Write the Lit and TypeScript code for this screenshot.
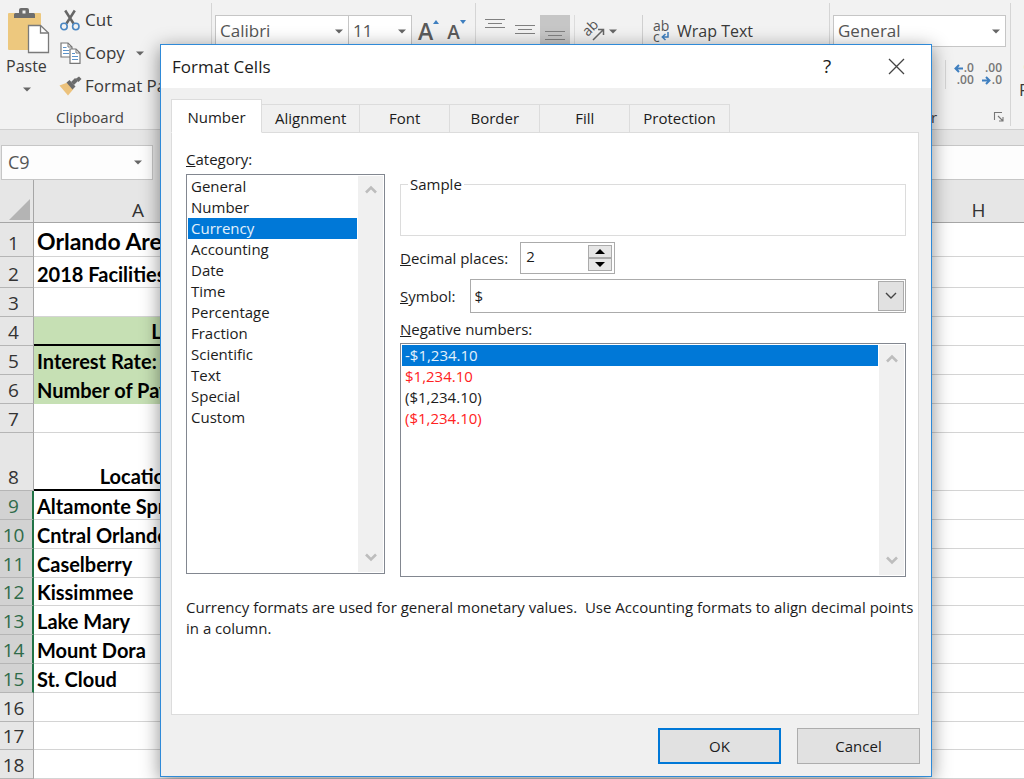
import { LitElement, html, svg, css, nothing } from "lit";
import { customElement, state } from "lit/decorators.js";
import { classMap } from "lit/directives/class-map.js";
import { styleMap } from "lit/directives/style-map.js";

interface Row {
  n: number;
  h: number;
  text?: string;
  kind?: string;
}

const COLUMNS = ["A", "B", "C", "D", "E", "F", "G", "H"];

const ROWS: Row[] = [
  { n: 1, h: 34, text: "Orlando Area", kind: "title" },
  { n: 2, h: 31, text: "2018 Facilities" },
  { n: 3, h: 29 },
  { n: 4, h: 29, text: "Loan Details", kind: "fill ruled merged" },
  { n: 5, h: 29, text: "Interest Rate:", kind: "fill" },
  { n: 6, h: 29, text: "Number of Payments", kind: "fill" },
  { n: 7, h: 29 },
  { n: 8, h: 58, text: "Location", kind: "ruled center" },
  { n: 9, h: 29, text: "Altamonte Springs" },
  { n: 10, h: 29, text: "Cntral Orlando" },
  { n: 11, h: 29, text: "Caselberry" },
  { n: 12, h: 28, text: "Kissimmee" },
  { n: 13, h: 29, text: "Lake Mary" },
  { n: 14, h: 29, text: "Mount Dora" },
  { n: 15, h: 29, text: "St. Cloud" },
  { n: 16, h: 29 },
  { n: 17, h: 28 },
  { n: 18, h: 29 },
];

const CATEGORIES = [
  "General", "Number", "Currency", "Accounting", "Date", "Time",
  "Percentage", "Fraction", "Scientific", "Text", "Special", "Custom",
];

const NEGATIVES = [
  { text: "-$1,234.10", red: false },
  { text: "$1,234.10", red: true },
  { text: "($1,234.10)", red: false },
  { text: "($1,234.10)", red: true },
];

const TABS = ["Number", "Alignment", "Font", "Border", "Fill", "Protection"];

const caret = html`<svg class="caret" width="8" height="5" viewBox="0 0 8 5" aria-hidden="true"><path d="M0 0.5H8L4 4.5Z" fill="#666" /></svg>`;

const pasteIcon = html`<svg width="44" height="46" viewBox="0 0 44 46" aria-hidden="true">
  <rect x="2" y="5" width="33" height="37" rx="1" fill="#edc87e" />
  <path d="M8 10V6.500Q8 5 9.500 5H13V2Q13 0 15 0H21Q23 0 23 2V5H27.500Q29 5 29 6.500V10Z" fill="#6d6d6d" />
  <rect x="16.500" y="2.500" width="3" height="3" fill="#f2f2f2" />
  <path d="M22.500 17.500H34.500L42.500 25V44.500H22.500Z" fill="#fff" stroke="#7a7a7a" stroke-width="1.300" />
  <path d="M34.500 17.500V25H42.500" fill="none" stroke="#7a7a7a" stroke-width="1.300" />
</svg>`;

const cutIcon = html`<svg width="20" height="21" viewBox="0 0 20 21" aria-hidden="true">
  <path d="M5.200 0.500L13.500 13.500M14.800 0.500L6.500 13.500" stroke="#666" stroke-width="2.500" fill="none" />
  <circle cx="4" cy="16.500" r="3.200" fill="none" stroke="#4a86c2" stroke-width="1.600" />
  <circle cx="15.800" cy="16.500" r="3.200" fill="none" stroke="#4a86c2" stroke-width="1.600" />
</svg>`;

const copyIcon = html`<svg width="21" height="22" viewBox="0 0 21 22" aria-hidden="true">
  <path d="M1 1H8L12 5V15H1Z" fill="#fff" stroke="#777" stroke-width="1.200" />
  <path d="M8 1V5H12" fill="none" stroke="#777" />
  <path d="M3 5.500H6.500M3 8.500H9M3 11.500H9" stroke="#5b93ca" stroke-width="1.200" />
  <path d="M10 7H16L20 11V21.300H10Z" fill="#fff" stroke="#777" stroke-width="1.200" />
  <path d="M16 7V11H20" fill="none" stroke="#777" />
  <path d="M12 11.500H15M12 14.500H18M12 17.500H18" stroke="#5b93ca" stroke-width="1.200" />
</svg>`;

const painterIcon = html`<svg width="23" height="20" viewBox="0 0 23 20" aria-hidden="true">
  <path d="M0.500 9.500L8.500 6.500L14.500 13L9 19.500Z" fill="#ecc27c" />
  <path d="M7.500 6.500L10.500 4L16.500 10.500L13.500 13.500Z" fill="#6b6b6b" />
  <path d="M13.500 7.500L17.500 3.500" stroke="#6b6b6b" stroke-width="4" />
  <path d="M16.500 3L20 0.500L22.500 3L19.500 6Z" fill="#6b6b6b" />
</svg>`;

const alignIcon = html`<svg width="20" height="10" viewBox="0 0 20 10" aria-hidden="true">
  <path d="M0 0.500H20M3 4.500H17M0 8.500H20" stroke="#808080" stroke-width="1" />
</svg>`;

const orientIcon = html`<svg width="21" height="22" viewBox="0 0 21 22" aria-hidden="true">
  <g transform="rotate(-45 8 10)"><text class="glyph" x="0" y="12">ab</text></g>
  <path d="M9 20L19 10M14 9.500H19.500V15" fill="none" stroke="#666" stroke-width="1.500" />
</svg>`;

const wrapIcon = html`<span class="wrap-ic" aria-hidden="true"><span>ab</span><span class="line">c<svg width="9" height="9" viewBox="0 0 9 9">
  <path d="M7 0V5H1.500M4.500 2L1.300 5L4.500 8" fill="none" stroke="#3f7fbf" stroke-width="1.500" />
</svg></span></span>`;

const arrowLeft = html`<svg width="9" height="9" viewBox="0 0 9 9"><path d="M9 4.500H1.500M5 1L1.500 4.500L5 8" fill="none" stroke="#3f7fbf" stroke-width="2" /></svg>`;
const arrowRight = html`<svg width="9" height="9" viewBox="0 0 9 9"><path d="M0 4.500H7.500M4 1L7.500 4.500L4 8" fill="none" stroke="#3f7fbf" stroke-width="2" /></svg>`;

const launcherIcon = html`<svg width="10" height="10" viewBox="0 0 10 10" aria-hidden="true">
  <path d="M0.500 8V0.500H8M4 4L8.500 8.500M9 5V9H5" fill="none" stroke="#777" stroke-width="1.100" />
</svg>`;

const chevron = (up: boolean) => svg`<path d=${up ? "M1 7.500L6 2.500L11 7.500" : "M1 1.500L6 6.500L11 1.500"} fill="none" stroke="#bdbdbd" stroke-width="2.600" />`;

@customElement("app-root")
export class AppRoot extends LitElement {
  @state() private tab = "Number";
  @state() private category = "Currency";
  @state() private places = 2;

  static styles = css`
    :host {
      display: block;
      position: relative;
      height: 100vh;
      min-height: 779px;
      overflow: hidden;
      background: #fff;
      color: #222;
      font-family: "Open Sans", "Noto Sans", sans-serif;
      font-size: 15px;
      line-height: 21px;
    }
    * { box-sizing: border-box; }
    button, select, input {
      margin: 0;
      padding: 0;
      border: 0;
      border-radius: 0;
      outline: 0;
      background: none;
      color: inherit;
      font: inherit;
      appearance: none;
    }
    svg { display: block; flex: none; overflow: visible; }
    .caret { pointer-events: none; }

    .ribbon {
      display: flex;
      height: 130px;
      overflow: hidden;
      background: #f2f2f2;
      border-bottom: 1px solid #cfcfcf;
      font-size: 17px;
      line-height: 24px;
      color: #3a3a3a;
      white-space: nowrap;
    }
    .group {
      flex: none;
      display: flex;
      flex-direction: column;
      margin: 3px 0;
      border-right: 1px solid #d5d5d5;
    }
    .tools { display: flex; }
    .caption {
      display: flex;
      justify-content: center;
      align-items: center;
      margin-top: auto;
      font-size: 15px;
      line-height: 18px;
      color: #444;
    }
    .g-clip { width: 212px; }
    .g-clip .tools { gap: 8px; padding: 5px 0 0 6px; }
    .g-clip .caption { padding-right: 31px; }
    .g-font { width: 264px; padding-top: 12px; }
    .g-font .tools { padding-left: 3px; }
    .g-align { width: 354px; padding-top: 12px; }
    .g-num { width: 181px; padding: 12px 0 0 3px; }
    .g-num .caption { justify-content: space-between; padding: 0 6px 0 46px; }
    .g-styles { width: 120px; padding: 52px 0 0 8px; border: 0; align-items: flex-start; }
    .paste {
      display: flex;
      flex-direction: column;
      align-items: flex-start;
      width: 46px;
      font-size: 16px;
    }
    .paste .caret { margin: 9px 0 0 17px; }
    .stack { display: flex; flex-direction: column; gap: 9px; }
    .tool { display: flex; align-items: center; gap: 5px; }
    .tool .caret { margin-left: 6px; }
    .ic { display: flex; justify-content: center; width: 20px; }
    .combo {
      display: flex;
      align-items: center;
      height: 32px;
      padding-right: 5px;
      background: #fff;
      border: 1px solid #c6c6c6;
    }
    .combo select { flex: 1; min-width: 0; height: 30px; padding-left: 4px; color: #555; }
    .c-face { width: 134px; }
    .c-size { width: 63px; border-left: 0; }
    .c-format { width: 173px; }
    .grow {
      display: flex;
      align-items: flex-start;
      height: 32px;
      padding-left: 6px;
      font-weight: 600;
      color: #5a5a5a;
    }
    .grow .letter { font-size: 23px; line-height: 32px; }
    .grow .letter.small { font-size: 19px; line-height: 34px; }
    .grow + .grow { padding-left: 8px; }
    .grow svg { margin-top: 5px; }
    .g-align .tools { padding-left: 4px; }
    .al { display: flex; justify-content: center; width: 30px; height: 32px; padding-top: 4px; }
    .al.mid { padding-top: 10px; }
    .al.low { padding-top: 16px; background: #c6c6c6; }
    .thin { width: 1px; margin: 0 9px 0 4px; background: #dcdcdc; }
    .orient { display: flex; align-items: center; gap: 4px; height: 32px; }
    .wrap {
      display: flex;
      align-items: center;
      gap: 6px;
      height: 32px;
      margin-left: 25px;
      padding-left: 10px;
      border-left: 1px solid #d0d0d0;
      font-size: 16px;
    }
    .glyph { font: 14px "Open Sans", sans-serif; fill: #555; }
    .wrap-ic {
      display: flex;
      flex-direction: column;
      width: 18px;
      font-size: 14px;
      line-height: 11px;
      color: #555;
      text-align: left;
    }
    .line { display: flex; align-items: center; gap: 1px; }
    .decimals {
      display: flex;
      justify-content: flex-end;
      gap: 8px;
      margin-top: 13px;
      padding: 0 8px 0 0;
    }
    .decimals .sep { width: 1px; height: 29px; background: #d5d5d5; }
    .decimals button {
      display: flex;
      flex-direction: column;
      align-items: flex-end;
      padding-top: 2px;
      font-size: 12px;
      line-height: 12px;
      font-weight: 600;
      color: #777;
    }
    .styles-btn { line-height: 23px; text-align: center; }
    .styles-btn .caret { display: inline-block; margin-left: 4px; }

    .bar {
      display: flex;
      gap: 9px;
      height: 50px;
      padding: 15px 0 0 1px;
      background: #e6e6e6;
      color: #555;
      font-size: 18px;
    }
    .namebox {
      display: flex;
      align-items: center;
      width: 152px;
      height: 35px;
      padding-right: 10px;
      background: #fdfdfd;
      border: 1px solid #c6c6c6;
    }
    .namebox input { flex: 1; min-width: 0; padding-left: 6px; }
    .formula {
      flex: 1;
      height: 35px;
      background: #fdfdfd;
      border: 1px solid #c6c6c6;
      border-right: 0;
    }

    .sheet {
      width: 100%;
      table-layout: fixed;
      border-collapse: separate;
      border-spacing: 0;
      color: #000;
    }
    .sheet th, .sheet td { padding: 0; border-bottom: 1px solid #d4d4d4; overflow: hidden; white-space: nowrap; }
    .sheet th { background: #e6e6e6; color: #333; font-size: 19px; line-height: 24px; font-weight: 400; }
    .sheet thead th { height: 43px; vertical-align: bottom; border-color: #a6a6a6; }
    .sheet thead th:first-child { padding: 0 2px 2px 9px; border-right: 1px solid #a6a6a6; }
    .sheet tbody th {
      padding: 0 6px 1px 0;
      border-right: 1px solid #a6a6a6;
      border-bottom-color: #b5b5b5;
      vertical-align: bottom;
    }
    .sheet tbody th.on {
      padding-right: 5px;
      background: #d2d2d2;
      color: #2f6b49;
      border-right: 2px solid #217346;
    }
    .sheet td {
      padding-left: 3px;
      vertical-align: bottom;
      font: 700 20px/26px Lato, Carlito, sans-serif;
    }
    .sheet td.title { font-size: 23px; line-height: 30px; }
    .sheet td.fill { background: #c6e0b4; border-color: #c6e0b4; }
    .sheet td.ruled { border-bottom: 2px solid #000; }
    .sheet td.center, .sheet td.merged { text-align: center; padding: 0; }
    .w-row { width: 34px; }
    .w-a { width: 208px; }
    .w-b { width: 136px; }
    .w-c { width: 171px; }
    .w-d { width: 96px; }

    .dialog {
      position: absolute;
      left: 160px;
      right: 92px;
      top: 44px;
      background: #f0f0f0;
      border: 1px solid #2f8ad8;
      box-shadow: 0 4px 18px rgba(0, 0, 0, 0.45);
      color: #1c1c1c;
    }
    .titlebar {
      display: flex;
      align-items: center;
      height: 43px;
      padding: 0 25px 0 11px;
      background: #fff;
    }
    .titlebar h1 { flex: 1; margin: 0; font-size: 17px; line-height: 24px; font-weight: 400; }
    .titlebar button { display: flex; justify-content: center; width: 20px; font-size: 19px; }
    .titlebar .help { margin-right: 49px; }
    .body { padding: 11px 12px 12px 10px; }
    .tabs { position: relative; z-index: 1; display: flex; align-items: flex-end; height: 34px; }
    .tab {
      height: 29px;
      min-width: 90px;
      padding: 0 13px;
      border: 1px solid #dcdcdc;
      border-left: 0;
    }
    .tab.on {
      height: 34px;
      min-width: 91px;
      padding-top: 2px;
      background: #fff;
      border-left: 1px solid #dcdcdc;
      border-bottom-color: #fff;
    }
    .panel {
      margin-top: -1px;
      padding: 16px 0 75px 14px;
      background: #fff;
      border: 1px solid #dcdcdc;
    }
    .columns {
      display: grid;
      grid-template-columns: 199px minmax(0, 1fr);
      gap: 15px;
      padding-right: 12px;
    }
    .label { display: block; }
    .list {
      display: flex;
      margin-top: 4px;
      padding: 1px;
      background: #fff;
      border: 1px solid #828790;
    }
    .list select { flex: 1; min-width: 0; height: 100%; overflow: hidden; }
    .list option {
      min-height: 21px;
      height: 21px;
      padding: 0 0 0 3px;
      line-height: 21px;
      color: #1c1c1c;
    }
    .list option.red { color: #f22; }
    .list option:checked {
      background: #0078d7 linear-gradient(#0078d7, #0078d7);
      color: #fff;
      -webkit-text-fill-color: #e4f1fb;
    }
    .cats { height: 400px; }
    .negs { height: 234px; margin-top: 3px; }
    .scroll {
      display: flex;
      flex-direction: column;
      justify-content: space-between;
      align-items: center;
      width: 25px;
      margin-left: 1px;
      padding: 9px 0;
      background: #f0f0f0;
    }
    .sample {
      height: 62px;
      margin: 25px 0 0;
      padding: 0 7px;
      border: 1px solid #dcdcdc;
    }
    .sample legend { padding: 0 2px; }
    .places { display: flex; align-items: center; gap: 12px; margin-top: 6px; }
    .spin {
      display: flex;
      width: 95px;
      height: 32px;
      padding: 2px;
      border: 1px solid #ababab;
    }
    .spin input { flex: 1; min-width: 0; padding: 0 0 3px 3px; appearance: textfield; }
    .spin input::-webkit-inner-spin-button { appearance: none; display: none; }
    .arrows { display: flex; flex-direction: column; width: 24px; }
    .arrows button {
      flex: 1;
      display: flex;
      align-items: center;
      justify-content: center;
      background: #e6e6e6;
      border: 1px solid #ababab;
    }
    .symbol { display: flex; align-items: center; gap: 14px; margin-top: 5px; }
    .drop {
      flex: 1;
      display: flex;
      height: 34px;
      padding: 1px;
      border: 1px solid #ababab;
    }
    .drop select { flex: 1; min-width: 0; padding-left: 3px; }
    .drop .arrow {
      display: flex;
      align-items: center;
      justify-content: center;
      width: 26px;
      background: #e1e1e1;
      border: 1px solid #ababab;
      pointer-events: none;
    }
    .neg-label { margin-top: 6px; }
    .desc { margin: 20px 0 0; white-space: pre-wrap; }
    .footer { display: flex; justify-content: flex-end; gap: 16px; margin: 13px -1px 0 0; }
    .btn { width: 123px; height: 36px; background: #e1e1e1; border: 1px solid #adadad; }
    .btn.main { border: 2px solid #0078d7; }
  `;

  private combo(label: string, value: string, cls: string) {
    return html`<label class="combo ${cls}">
      <select aria-label=${label}><option>${value}</option></select>
      ${caret}
    </label>`;
  }

  private ribbon() {
    return html`<header class="ribbon">
      <section class="group g-clip">
        <div class="tools">
          <button class="paste">${pasteIcon}<span>Paste</span>${caret}</button>
          <div class="stack">
            <button class="tool"><span class="ic">${cutIcon}</span>Cut</button>
            <button class="tool"><span class="ic">${copyIcon}</span>Copy ${caret}</button>
            <button class="tool"><span class="ic">${painterIcon}</span>Format Painter</button>
          </div>
        </div>
        <div class="caption">Clipboard</div>
      </section>
      <section class="group g-font">
        <div class="tools">
          ${this.combo("Font", "Calibri", "c-face")}
          ${this.combo("Font size", "11", "c-size")}
          <button class="grow" aria-label="Increase font size"><span class="letter">A</span>
            <svg width="6" height="4" viewBox="0 0 6 4"><path d="M3 0L6 4H0Z" fill="#3f7fbf" /></svg></button>
          <button class="grow" aria-label="Decrease font size"><span class="letter small">A</span>
            <svg width="6" height="4" viewBox="0 0 6 4"><path d="M0 0H6L3 4Z" fill="#3f7fbf" /></svg></button>
        </div>
      </section>
      <section class="group g-align">
        <div class="tools">
          <button class="al" aria-label="Top align">${alignIcon}</button>
          <button class="al mid" aria-label="Middle align">${alignIcon}</button>
          <button class="al low" aria-label="Bottom align">${alignIcon}</button>
          <span class="thin"></span>
          <button class="orient" aria-label="Orientation">${orientIcon}${caret}</button>
          <button class="wrap">${wrapIcon}Wrap Text</button>
        </div>
      </section>
      <section class="group g-num">
        ${this.combo("Number format", "General", "c-format")}
        <div class="decimals">
          <span class="sep"></span>
          <button aria-label="Increase decimal"><span class="line">${arrowLeft}.0</span><span>.00</span></button>
          <button aria-label="Decrease decimal"><span>.00</span><span class="line">${arrowRight}.0</span></button>
        </div>
        <div class="caption"><span>Number</span>${launcherIcon}</div>
      </section>
      <section class="group g-styles">
        <button class="styles-btn">Conditional<br />Formatting${caret}</button>
      </section>
    </header>`;
  }

  private sheet() {
    return html`<table class="sheet">
      <colgroup>
        <col class="w-row" /><col class="w-a" /><col class="w-b" /><col class="w-c" />
        <col class="w-d" /><col class="w-d" /><col class="w-d" /><col class="w-d" /><col />
      </colgroup>
      <thead>
        <tr>
          <th aria-label="Select all"><svg width="21" height="21" viewBox="0 0 21 21"><path d="M21 0V21H0Z" fill="#b4b4b4" /></svg></th>
          ${COLUMNS.map((c) => html`<th scope="col">${c}</th>`)}
        </tr>
      </thead>
      <tbody>
        ${ROWS.map((r) => {
          const merged = !!r.kind?.includes("merged");
          const side = !merged && r.kind?.match(/fill|ruled/)?.[0];
          const first = merged ? 2 : 1;
          return html`<tr style=${styleMap({ height: `${r.h}px` })}>
            <th scope="row" class=${classMap({ on: r.n >= 9 && r.n <= 15 })}>${r.n}</th>
            <td class=${r.kind ?? ""} colspan=${first}>${r.text ?? nothing}</td>
            ${COLUMNS.slice(first).map((c) => html`<td class=${c === "B" && side ? side : ""}></td>`)}
          </tr>`;
        })}
      </tbody>
    </table>`;
  }

  private scroll() {
    return html`<span class="scroll" aria-hidden="true">
      <svg width="12" height="10" viewBox="0 0 12 10">${chevron(true)}</svg>
      <svg width="12" height="10" viewBox="0 0 12 10">${chevron(false)}</svg>
    </span>`;
  }

  private step(by: number) {
    this.places = Math.min(30, Math.max(0, this.places + by));
  }

  private dialog() {
    return html`<section class="dialog" role="dialog" aria-labelledby="dlg-title">
      <div class="titlebar">
        <h1 id="dlg-title">Format Cells</h1>
        <button class="help">?</button>
        <button aria-label="Close"><svg width="17" height="17" viewBox="0 0 17 17"><path d="M1 1L16 16M16 1L1 16" stroke="#444" stroke-width="1.300" /></svg></button>
      </div>
      <div class="body">
        <div class="tabs" role="tablist">
          ${TABS.map((t) => html`<button role="tab" aria-selected=${t === this.tab}
            class=${classMap({ tab: true, on: t === this.tab })}
            @click=${() => (this.tab = t)}>${t}</button>`)}
        </div>
        <div class="panel">
          <div class="columns">
            <div>
              <label class="label" for="category"><u>C</u>ategory:</label>
              <div class="list cats">
                <select id="category" size="12"
                  @change=${(e: Event) => (this.category = (e.target as HTMLSelectElement).value)}>
                  ${CATEGORIES.map((c) => html`<option ?selected=${c === this.category}>${c}</option>`)}
                </select>
                ${this.scroll()}
              </div>
            </div>
            <div>
              <fieldset class="sample"><legend>Sample</legend></fieldset>
              <div class="places">
                <label for="places"><u>D</u>ecimal places:</label>
                <div class="spin">
                  <input id="places" type="number" .value=${String(this.places)} />
                  <div class="arrows">
                    <button aria-label="More" @click=${() => this.step(1)}><svg width="10" height="5" viewBox="0 0 10 5"><path d="M5 0L10 5H0Z" fill="#000" /></svg></button>
                    <button aria-label="Fewer" @click=${() => this.step(-1)}><svg width="10" height="5" viewBox="0 0 10 5"><path d="M0 0H10L5 5Z" fill="#000" /></svg></button>
                  </div>
                </div>
              </div>
              <div class="symbol">
                <label for="symbol"><u>S</u>ymbol:</label>
                <div class="drop">
                  <select id="symbol"><option>$</option></select>
                  <span class="arrow"><svg width="12" height="8" viewBox="0 0 12 8"><path d="M1 1L6 6L11 1" fill="none" stroke="#444" stroke-width="1.400" /></svg></span>
                </div>
              </div>
              <label class="label neg-label" for="negative"><u>N</u>egative numbers:</label>
              <div class="list negs">
                <select id="negative" size="4">
                  ${NEGATIVES.map((n, i) => html`<option class=${n.red ? "red" : ""} ?selected=${i === 0}>${n.text}</option>`)}
                </select>
                ${this.scroll()}
              </div>
            </div>
          </div>
          <p class="desc">Currency formats are used for general monetary values.  Use Accounting formats to align decimal points in a column.</p>
        </div>
        <div class="footer">
          <button class="btn main">OK</button>
          <button class="btn">Cancel</button>
        </div>
      </div>
    </section>`;
  }

  render() {
    return html`
      ${this.ribbon()}
      <div class="bar">
        <label class="namebox"><input aria-label="Name box" .value=${"C9"} />${caret}</label>
        <div class="formula"></div>
      </div>
      ${this.sheet()}
      ${this.dialog()}
    `;
  }
}
